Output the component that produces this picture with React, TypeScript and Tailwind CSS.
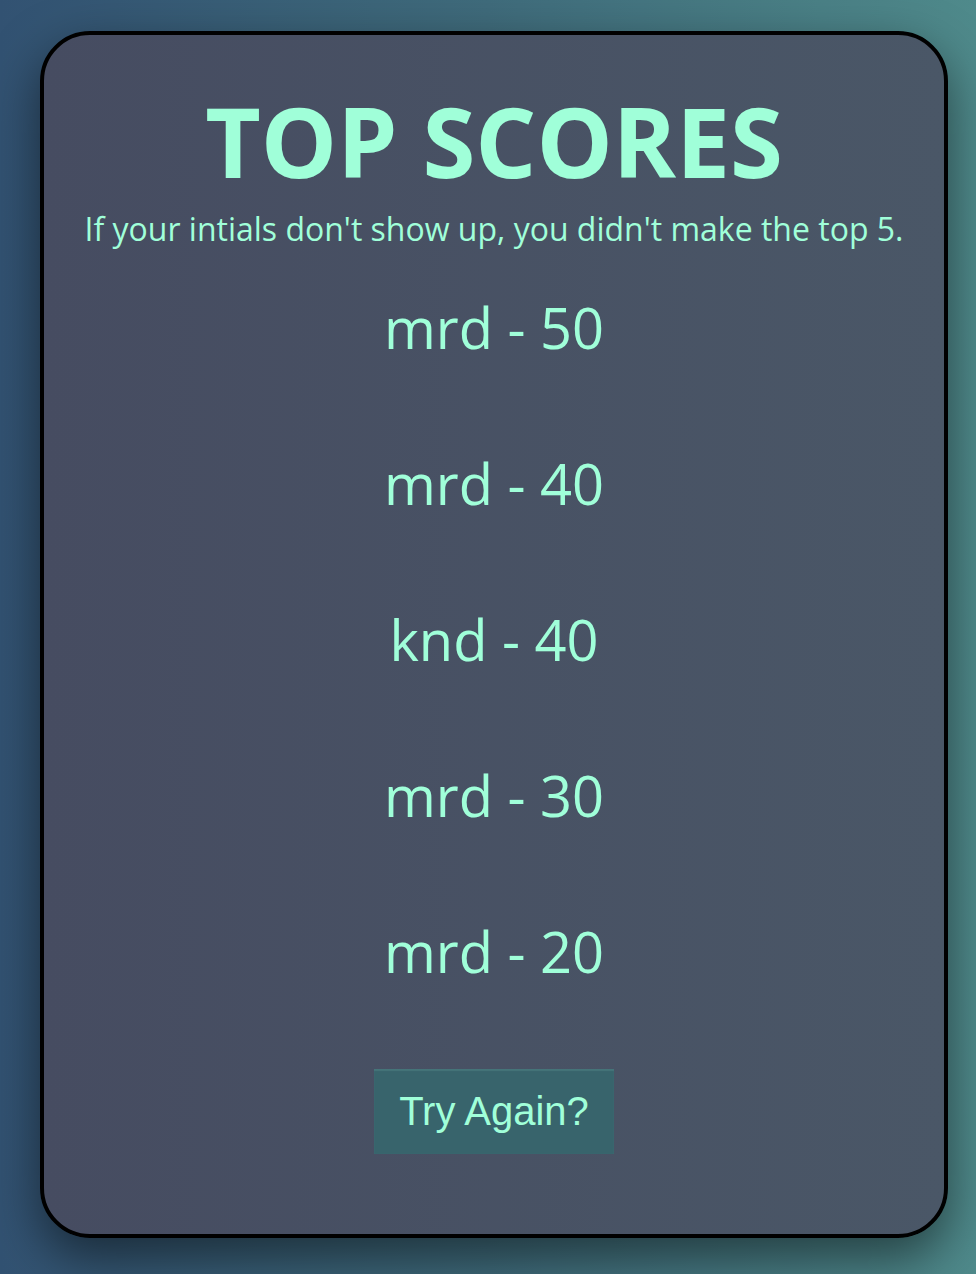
const scores = [
  { initials: "mrd", points: 50 },
  { initials: "mrd", points: 40 },
  { initials: "knd", points: 40 },
  { initials: "mrd", points: 30 },
  { initials: "mrd", points: 20 },
];

export default function App() {
  return (
    <div className="flex min-h-screen flex-col bg-[linear-gradient(to_right,#325272,#3f6b7b_50%,#4f8a8b)] pt-[31px] pr-7 pb-9 pl-10 font-['Open_Sans',sans-serif] text-[#a0ffd9]">
      <main className="flex grow flex-col items-center rounded-[50px] border-4 border-black bg-[linear-gradient(to_right,#464c61,#4a5767)] px-10 pt-10 pb-20 text-center shadow-[0_20px_50px_rgba(0,0,0,0.5)]">
        <h1 className="text-[96px] leading-[132px] font-bold">TOP SCORES</h1>
        <p className="text-[32px] leading-[44px]">If your intials don't show up, you didn't make the top 5.</p>
        <ol className="mt-9 flex flex-col gap-[76px]">
          {scores.map((score, index) => (
            <li key={index} className="text-[56px] leading-[80px]">
              {score.initials} - {score.points}
            </li>
          ))}
        </ol>
        <button
          type="button"
          className="mt-[78px] h-[85px] w-60 bg-[#38646c] pb-0.5 font-['Liberation_Sans',sans-serif] text-[40px] leading-[46px] shadow-[inset_0_2px_1px_#457479,inset_0_0_1px_#417277]"
        >
          Try Again?
        </button>
      </main>
    </div>
  );
}
